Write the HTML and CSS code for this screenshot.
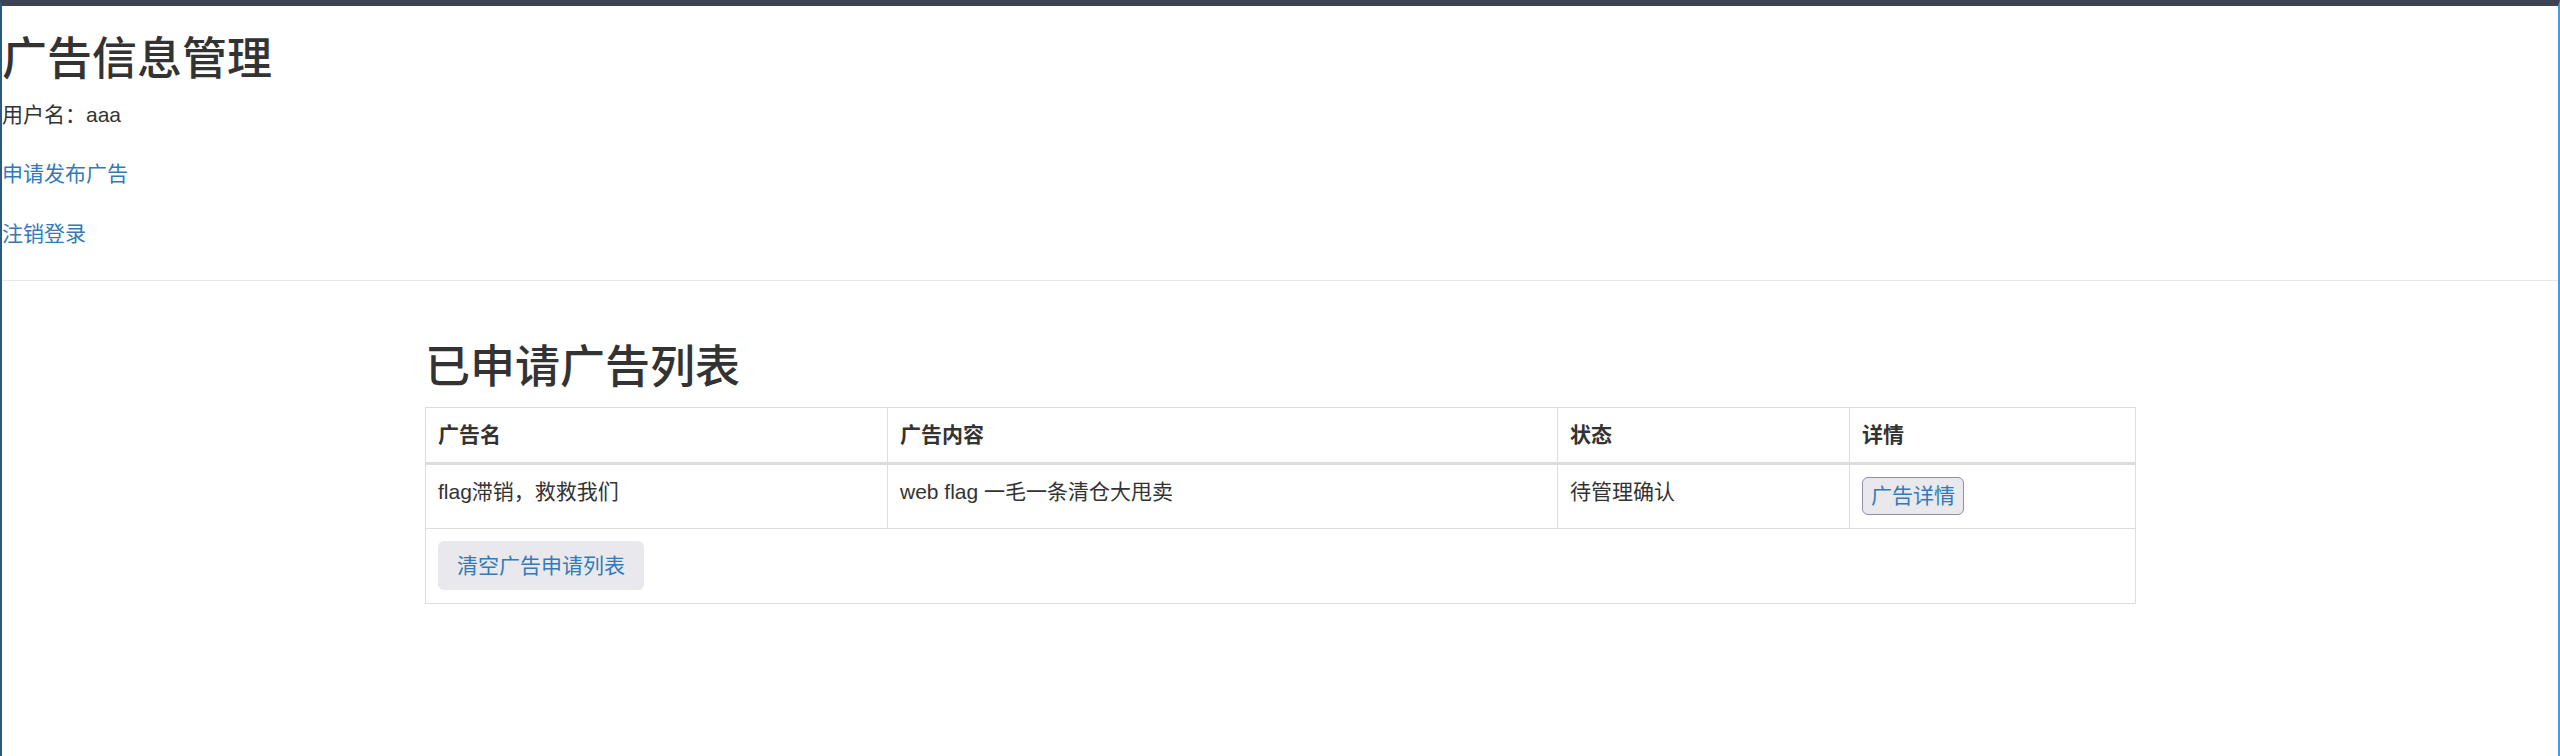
FILE: index.html
```html
<!DOCTYPE html>
<html lang="zh-CN">
<head>
<meta charset="utf-8">
<title>广告信息管理</title>
<link rel="stylesheet" href="styles.css">
</head>
<body>
  <header class="header">
    <h2 class="title">广告信息管理</h2>
    <p class="user">用户名：aaa</p>
    <p class="nav-line"><a class="link" href="#">申请发布广告</a></p>
    <p class="nav-line last"><a class="link" href="#">注销登录</a></p>
  </header>
  <hr class="divider">
  <main class="container">
    <h2 class="section-title">已申请广告列表</h2>
    <table class="ad-table">
      <colgroup>
        <col class="c1"><col class="c2"><col class="c3"><col class="c4">
      </colgroup>
      <thead>
        <tr><th>广告名</th><th>广告内容</th><th>状态</th><th>详情</th></tr>
      </thead>
      <tbody>
        <tr>
          <td>flag滞销，救救我们</td>
          <td>web flag 一毛一条清仓大甩卖</td>
          <td>待管理确认</td>
          <td><a href="#"><button class="detail-btn" type="button">广告详情</button></a></td>
        </tr>
        <tr>
          <td colspan="4"><a href="#"><button class="clear-btn" type="button">清空广告申请列表</button></a></td>
        </tr>
      </tbody>
    </table>
  </main>
</body>
</html>
```
FILE: styles.css
```css
* { box-sizing: border-box; }
html, body { height: 100%; }
body {
  margin: 0;
  height: 756px;
  overflow: hidden;
  border-top: 6px solid #3c4354;
  border-left: 2px solid #2a5b7f;
  border-right: 2px solid #3b9cf0;
  background: #fff;
  color: #333;
  font-family: "Liberation Sans", "Noto Sans CJK SC", sans-serif;
  font-size: 21px;
  line-height: 30px;
  text-spacing-trim: space-all;
}
a { color: #337ab7; text-decoration: none; }

.header { padding: 0; }
.title {
  margin: 29px 0 15px;
  font-size: 45px;
  line-height: 49.5px;
  font-weight: 500;
}
.user { margin: 0 0 29px; }
.nav-line { margin: 0 0 30px; }
.nav-line.last { margin-bottom: 0; }

.divider {
  margin: 31px 0 30px;
  border: 0;
  border-top: 1px solid #e8e8e8;
  height: 0;
}

.container {
  width: 1755px;
  padding: 0 22.5px;
  margin: 0 auto;
  display: flow-root;
}
.section-title {
  margin: 32px 0 15px;
  font-size: 45px;
  line-height: 49.5px;
  font-weight: 500;
}

.ad-table {
  width: 1710px;
  table-layout: fixed;
  border-collapse: collapse;
  border: 1px solid #ddd;
}
.c1 { width: 462px; }
.c2 { width: 670px; }
.c3 { width: 292px; }
.c4 { width: 286px; }
.ad-table th,
.ad-table td {
  padding: 12px 12px 13px;
  line-height: 30px;
  vertical-align: top;
  text-align: left;
  border: 1px solid #ddd;
}
.ad-table th {
  padding-bottom: 12px;
  font-weight: 700;
  border-bottom: 3px solid #ddd;
}

.detail-btn {
  font: inherit;
  line-height: 30px;
  padding: 3px 8px;
  border: 1px solid #8f8f9d;
  border-radius: 6px;
  background: #e9e9ed;
  color: #337ab7;
  cursor: pointer;
}
.clear-btn {
  font: inherit;
  line-height: 30px;
  padding: 9px 18px 8px;
  border: 1px solid transparent;
  border-radius: 6px;
  background: #e9e9ed;
  color: #337ab7;
  cursor: pointer;
}
```
